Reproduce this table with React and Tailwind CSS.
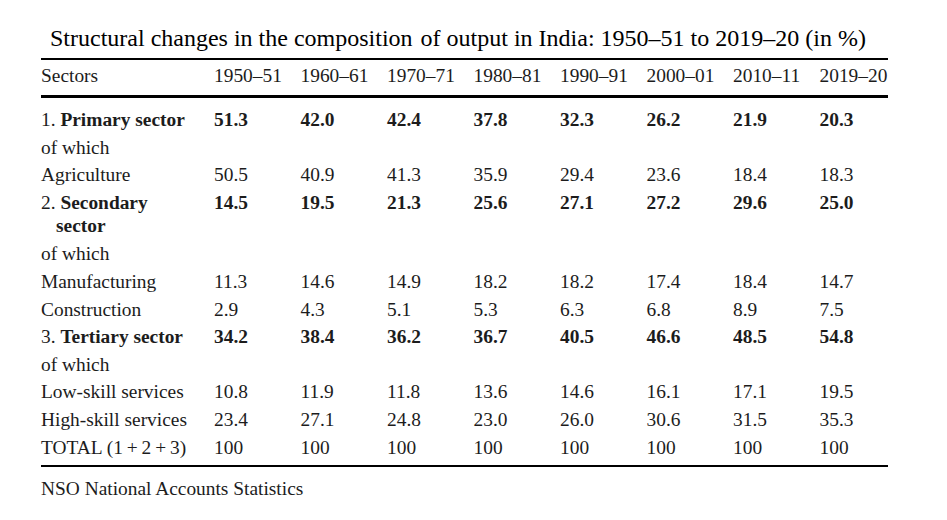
import React from 'react'

const years = ['1950–51', '1960–61', '1970–71', '1980–81', '1990–91', '2000–01', '2010–11', '2019–20']

const rows = [
    { num: '1.', label: 'Primary sector', bold: true, values: ['51.3', '42.0', '42.4', '37.8', '32.3', '26.2', '21.9', '20.3'] },
    { label: 'of which' },
    { label: 'Agriculture', values: ['50.5', '40.9', '41.3', '35.9', '29.4', '23.6', '18.4', '18.3'] },
    { num: '2.', label: 'Secondary', label2: 'sector', bold: true, values: ['14.5', '19.5', '21.3', '25.6', '27.1', '27.2', '29.6', '25.0'] },
    { label: 'of which' },
    { label: 'Manufacturing', values: ['11.3', '14.6', '14.9', '18.2', '18.2', '17.4', '18.4', '14.7'] },
    { label: 'Construction', values: ['2.9', '4.3', '5.1', '5.3', '6.3', '6.8', '8.9', '7.5'] },
    { num: '3.', label: 'Tertiary sector', bold: true, values: ['34.2', '38.4', '36.2', '36.7', '40.5', '46.6', '48.5', '54.8'] },
    { label: 'of which' },
    { label: 'Low-skill services', values: ['10.8', '11.9', '11.8', '13.6', '14.6', '16.1', '17.1', '19.5'] },
    { label: 'High-skill services', values: ['23.4', '27.1', '24.8', '23.0', '26.0', '30.6', '31.5', '35.3'] },
    { label: 'TOTAL (1\u2009+\u20092\u2009+\u20093)', values: ['100', '100', '100', '100', '100', '100', '100', '100'] },
]

const Row = ({ row }) => {
    return (
        <div className="grid grid-cols-[173px_repeat(7,86.5px)_1fr] min-h-[27.6px] items-start">
            <div className="leading-[27.6px]">
                {row.num ? (
                    <div>
                        <span>{row.num} </span>
                        <span className="font-bold">{row.label}</span>
                        {row.label2 && (
                            <div className="font-bold pl-[15px] leading-[23px] -mt-[2px] pb-[3px]">{row.label2}</div>
                        )}
                    </div>
                ) : (
                    <span>{row.label}</span>
                )}
            </div>
            {(row.values || []).map((v, i) => (
                <div key={i} className={`leading-[27.6px] ${row.bold ? 'font-bold' : ''}`}>{v}</div>
            ))}
        </div>
    )
}

const App = () => {
    return (
        <div className="w-[947px] h-[520px] bg-white text-[#1c1c1c] font-['Liberation_Serif',serif] overflow-hidden">
            <div className="ml-[41px] w-[847px] pt-[23px]">
                <h1 className="text-[24px] leading-[30px] text-black pl-[9px] whitespace-nowrap">
                    Structural changes in the composition <span className="ml-[2px]">of output in India: 1950–51 to 2019–20 (in %)</span>
                </h1>
                <div className="mt-[5px] h-[2px] bg-black"></div>
                <div className="text-[19.4px]">
                    <div className="grid grid-cols-[173px_repeat(7,86.5px)_1fr] h-[35px] pt-[2px] items-start leading-[28px]">
                        <div>Sectors</div>
                        {years.map(y => (
                            <div key={y}>{y}</div>
                        ))}
                    </div>
                    <div className="h-[3px] bg-black"></div>
                    <div className="pt-[8px] pb-[4px]">
                        {rows.map((row, i) => (
                            <Row key={i} row={row} />
                        ))}
                    </div>
                    <div className="h-[2px] bg-black"></div>
                    <div className="pt-[10px] leading-[23px]">NSO National Accounts Statistics</div>
                </div>
            </div>
        </div>
    )
}

export default App
